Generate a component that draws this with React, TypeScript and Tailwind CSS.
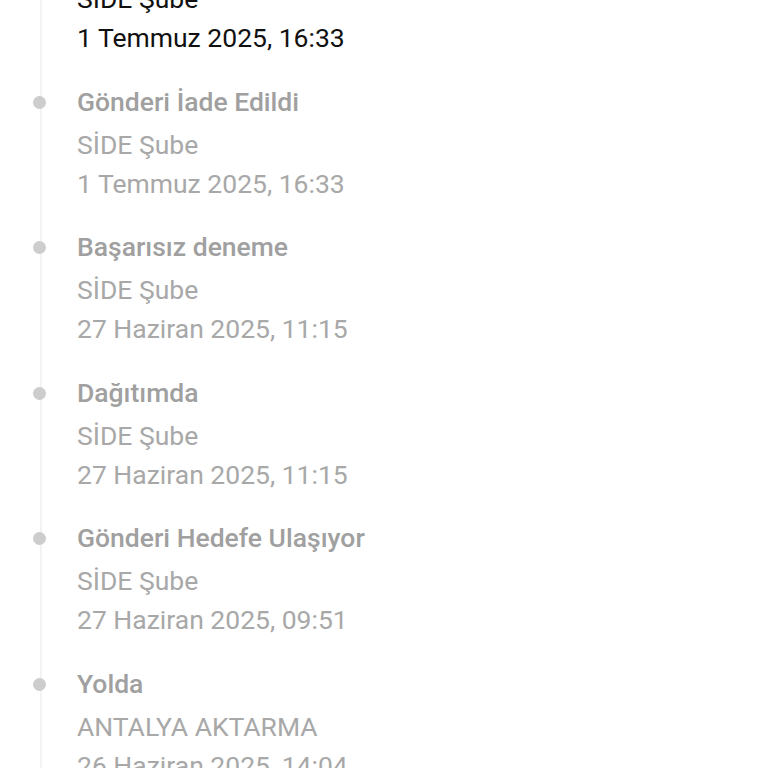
const events = [
  { title: "Teslim Edildi", place: "SİDE Şube", date: "1 Temmuz 2025, 16:33", active: true },
  { title: "Gönderi İade Edildi", place: "SİDE Şube", date: "1 Temmuz 2025, 16:33" },
  { title: "Başarısız deneme", place: "SİDE Şube", date: "27 Haziran 2025, 11:15" },
  { title: "Dağıtımda", place: "SİDE Şube", date: "27 Haziran 2025, 11:15" },
  { title: "Gönderi Hedefe Ulaşıyor", place: "SİDE Şube", date: "27 Haziran 2025, 09:51" },
  { title: "Yolda", place: "ANTALYA AKTARMA", date: "26 Haziran 2025, 14:04" },
];

export default function App() {
  return (
    <div className="h-[768px] w-[768px] overflow-hidden bg-white font-['Roboto',sans-serif]">
      <div className="relative mt-[-66px] pl-[33px]">
        <div className="absolute bottom-0 left-[39.5px] top-0 w-[2px] bg-[#f3f3f3]" />
        {events.map((e) => (
          <div key={e.date + e.title} className="relative flex pb-[22.5px]">
            <div className="flex h-[45px] w-[13px] shrink-0 items-center">
              <span
                className={
                  e.active
                    ? "relative h-[13px] w-[13px] rounded-full bg-[#2e7d32]"
                    : "relative h-[13px] w-[13px] rounded-full bg-[#cdcdcd]"
                }
              />
            </div>
            <div className="ml-[31px] flex flex-col">
              <div
                className={
                  e.active
                    ? "h-[45px] text-[26.5px] leading-[43px] font-medium text-[#111]"
                    : "h-[45px] text-[26.5px] leading-[43px] font-medium text-[#a0a0a0]"
                }
              >
                {e.title}
              </div>
              <div
                className={
                  e.active
                    ? "h-[39px] text-[26.5px] leading-[39px] text-[#111]"
                    : "h-[39px] text-[26.5px] leading-[39px] text-[#a8a8a8]"
                }
              >
                {e.place}
              </div>
              <div
                className={
                  e.active
                    ? "h-[39px] text-[26.5px] leading-[39px] text-[#111]"
                    : "h-[39px] text-[26.5px] leading-[39px] text-[#a8a8a8]"
                }
              >
                {e.date}
              </div>
            </div>
          </div>
        ))}
      </div>
    </div>
  );
}
